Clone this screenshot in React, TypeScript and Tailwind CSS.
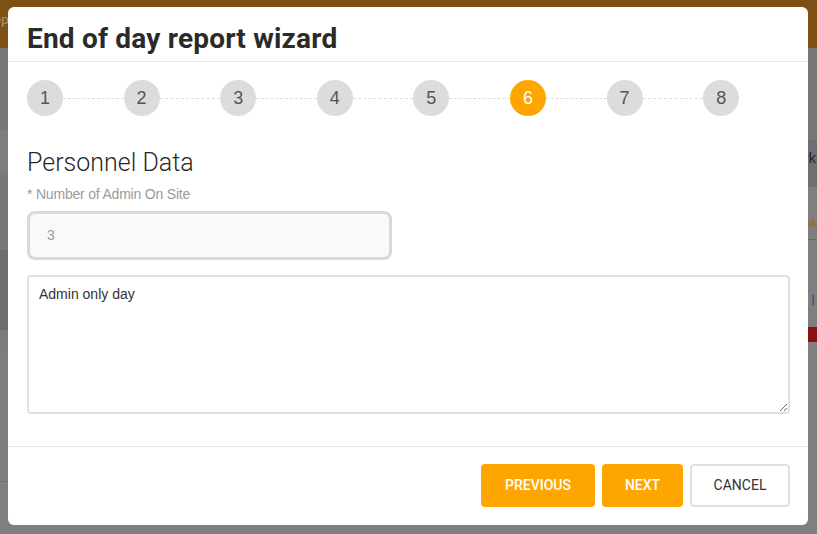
import React from "react";

const steps = [1, 2, 3, 4, 5, 6, 7, 8];

export default function App() {
  return (
    <div className="relative h-[534px] w-[817px] overflow-hidden bg-[#7f7f7f]" style={{ fontFamily: "'Liberation Sans', Arial, sans-serif" }}>
      {/* Backdrop page (dimmed) */}
      <div className="flex h-[48px] items-start bg-[#7d5114] pt-[10px] text-[13px] text-[#b89a70]">
        <span className="ml-[-6px]">ep</span>
      </div>
      <div className="flex">
        <div className="flex w-[12px] flex-col">
          <div className="h-[82px] bg-[#76777b]" />
          <div className="h-[45px] bg-[#7d7d7d]" />
          <div className="h-[75px] bg-[#76777b]" />
          <div className="h-[80px] bg-[#6d6e72]" />
          <div className="h-[22px] bg-[#7b7b7b]" />
          <div className="h-[130px] border-b border-[#727272] bg-[#7d7d7d]" />
        </div>
        <div className="flex-1" />
        <div className="flex w-[20px] flex-col text-[14px]">
          <div className="h-[92px] bg-[#76777b]" />
          <div className="flex h-[47px] items-start bg-[#6f7074] pl-[7px] pt-[8px] text-[#222]">rk</div>
          <div className="flex h-[53px] items-end border-b border-[#6a6a6a] bg-[#7f7f7f] pb-[8px] pl-[6px] text-[11px] text-[#9a6a20]">OM</div>
          <div className="flex h-[87px] items-end bg-[#7f7f7f] pb-[16px] pl-[14px] text-[#1c5a80]">I</div>
          <div className="h-[15px] bg-[#8b1010]" />
        </div>
      </div>

      {/* Modal */}
      <div className="absolute left-[8px] top-[7px] flex h-[518px] w-[800px] flex-col rounded-[6px] bg-white">
        <div className="flex h-[55px] shrink-0 items-end border-b border-[#e9e9ef] pb-[4px] pl-[19px]">
          <h1 className="text-[28px] font-bold leading-[36px] tracking-[0.2px] text-[#2a2a2a]" style={{ fontFamily: "Roboto, sans-serif" }}>
            End of day report wizard
          </h1>
        </div>

        <div className="flex flex-1 flex-col px-[19px]">
          <div className="mt-[18px] flex w-[773px] shrink-0">
            {steps.map((s, i) => (
              <div key={s} className="flex w-[96.6px] items-center">
                <div
                  className={
                    "flex h-[36px] w-[36px] shrink-0 items-center justify-center rounded-full text-[18px] " +
                    (s === 6 ? "bg-[#ffa500] text-white" : "bg-[#dcdcdc] text-[#555]")
                  }
                >
                  {s}
                </div>
                {i < steps.length - 1 && <div className="h-0 flex-1 border-t border-dashed border-[#dedede]" />}
              </div>
            ))}
          </div>

          <h2 className="mt-[32px] shrink-0 text-[25px] font-light leading-[30px] text-[#2a2a2a]" style={{ fontFamily: "Roboto, sans-serif" }}>
            Personnel Data
          </h2>
          <div className="mt-[8px] shrink-0 text-[14px] leading-[16px] tracking-[-0.2px] text-[#9a9a9a]">* Number of Admin On Site</div>
          <div className="mt-[9px] flex h-[49px] w-[365px] shrink-0 items-center rounded-[8px] border-[3px] border-[#d9d9d9] bg-[#faf9f7] pl-[17px] text-[14px] text-[#999]">
            3
          </div>
          <textarea
            className="mt-[15px] h-[139px] w-[763px] shrink-0 resize-y rounded-[4px] border-2 border-[#dde1e7] px-[10px] py-[7px] text-[14px] text-[#333] outline-none"
            defaultValue="Admin only day"
            style={{ fontFamily: "'Liberation Sans', Arial, sans-serif" }}
          />
        </div>

        <div className="flex h-[79px] shrink-0 items-start justify-end gap-[7px] border-t border-[#e9e9ef] pr-[18px] pt-[17px]" style={{ fontFamily: "Roboto, sans-serif" }}>
          <button className="h-[43px] w-[114px] rounded-[4px] bg-[#ffa500] text-[14px] font-medium text-white">PREVIOUS</button>
          <button className="h-[43px] w-[81px] rounded-[4px] bg-[#ffa500] text-[14px] font-medium text-white">NEXT</button>
          <button className="h-[43px] w-[100px] rounded-[4px] border-2 border-[#dde1e7] bg-white text-[14px] text-[#333]">CANCEL</button>
        </div>
      </div>
    </div>
  );
}
